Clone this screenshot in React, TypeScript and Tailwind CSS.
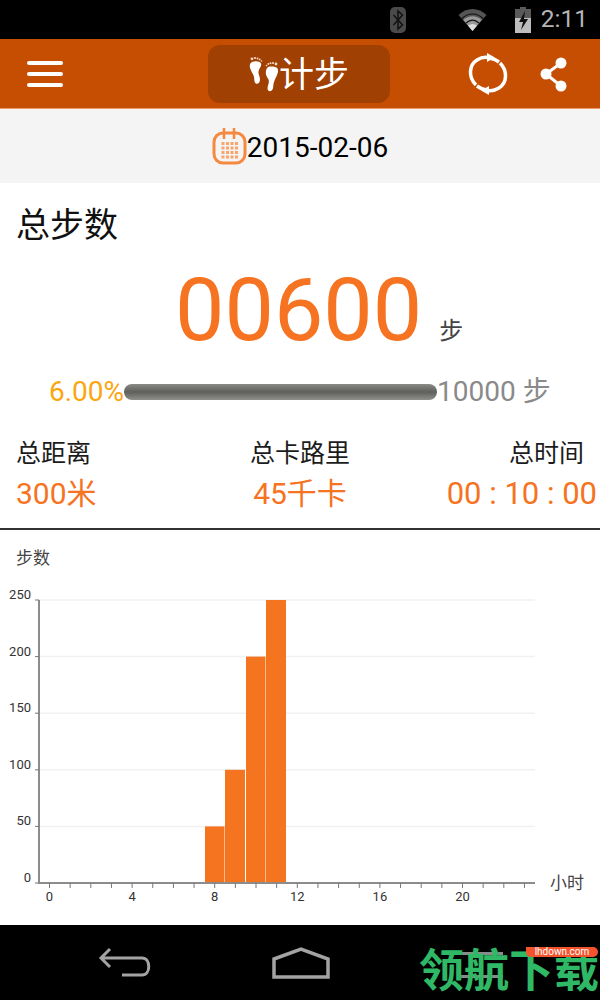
const cjk = "font-['Roboto','Noto_Sans_CJK_SC',sans-serif]";

const hours = Array.from({ length: 24 }, (_, i) => i);
const values = [250, 200, 150, 100, 50, 0];
const bars = [
  { x: 205, w: 19.5, value: 50 },
  { x: 225, w: 20, value: 100 },
  { x: 246, w: 19.5, value: 200 },
  { x: 266, w: 20, value: 250 },
];

const Feet = () => (
  <svg width="30" height="36" viewBox="0 0 30 36" fill="white" className="shrink-0">
    <path d="M3 6c3-1.500 8-1 9 1.500 1 2.500-2 5-2.500 8-.4 2.500 1.500 5 1.500 8 0 3-2 5-4 4-2-1-1.500-4-2-6.500C4.500 18 1 14 .8 10.500.7 8 1.500 6.800 3 6z" />
    <path d="M19 11c3-1 8-.5 9.500 1.500 1 1.500.5 4-.5 6.500-1.200 3-3 6-3.500 9-.4 2.500 0 5-1.800 6.500-2 1.500-4.200.2-4.200-2 0-3 1.800-5 1.300-8-.5-2.500-3-4-3-8 0-2.500 1-5 2.700-5.500z" />
    <g fill="#f5d9c4">
      <circle cx="3" cy="2.800" r="1.400" />
      <circle cx="6" cy="2" r="1.100" />
      <circle cx="8.500" cy="2.400" r="1" />
      <circle cx="10.700" cy="3.400" r="0.900" />
      <circle cx="12.500" cy="5" r="0.800" />
      <circle cx="27" cy="8" r="1.400" />
      <circle cx="24" cy="7" r="1.100" />
      <circle cx="21.500" cy="7.200" r="1" />
      <circle cx="19.300" cy="8" r="0.900" />
      <circle cx="17.500" cy="9.600" r="0.800" />
    </g>
  </svg>
);

const CalendarIcon = () => (
  <svg width="36" height="40" viewBox="0 0 36 40" fill="none" className="shrink-0">
    <rect x="2" y="7" width="31" height="30" rx="9" stroke="#f5893f" strokeWidth="3" />
    <path d="M12 2v11M22 2v11" stroke="#f5893f" strokeWidth="2.500" />
    {[0, 1, 2, 3].map((r) =>
      [0, 1, 2, 3].map((c) => (
        <rect key={`${r}-${c}`} x={9.5 + c * 4.5} y={16 + r * 4.5} width="3" height="3" fill="#f7a56c" />
      ))
    )}
  </svg>
);

const SyncIcon = () => (
  <svg width="42" height="42" viewBox="0 0 42 42" fill="none" stroke="white" strokeWidth="3.500">
    <path d="M9 32C1 24 2 12 10 7c4-2.500 8-3 11-2.500" />
    <path d="M33 10c8 8 7 20-1 25-4 2.500-8 3-11 2.500" />
    <path d="M20 0l8 4.500-8 4.500z" fill="white" stroke="none" />
    <path d="M22 33l-8 4.500 8 4.500z" fill="white" stroke="none" />
    <path d="M24 5.500c4 .5 6 2 8 3.500M18 36.500c-4-.5-6-2-8-3.500" />
  </svg>
);

const ShareIcon = () => (
  <svg width="28" height="36" viewBox="0 0 28 36" fill="white">
    <path d="M21 7L6 18l15 12" fill="none" stroke="white" strokeWidth="3" />
    <circle cx="21" cy="7" r="5.500" />
    <circle cx="6" cy="18" r="5.500" />
    <circle cx="21" cy="30" r="5.500" />
  </svg>
);

const StatusIcons = () => (
  <div className="flex items-center">
    <svg width="16" height="26" viewBox="0 0 16 26">
      <rect width="16" height="26" rx="5" fill="#4a4a4a" />
      <path d="M3.500 8l9 10-4.500 4V4l4.500 4-9 10" fill="none" stroke="#111" strokeWidth="1.500" />
    </svg>
    <svg width="29" height="24" viewBox="0 0 28 24" className="ml-[52px]">
      <path d="M0 7C8-1 20-1 28 7L14 23z" fill="#555" />
      <path d="M5 12c5-5 13-5 18 0l-9 11z" fill="#999" />
      <path d="M3.500 10.500c6-6 15-6 21 0M7.500 15c4-3.500 9-3.500 13 0" stroke="#111" strokeWidth="1.200" fill="none" />
      <path d="M9.500 17.500c3-2 6-2 9 0L14 23z" fill="#ddd" />
    </svg>
    <svg width="16" height="26" viewBox="0 0 16 26" className="ml-[28px]">
      <path d="M5 0h6v2h5v24H0V2h5z" fill="#5a5a5a" />
      <path d="M0 11h16v15H0z" fill="#bdbdbd" />
      <path d="M10 4L4 15h4l-2 8 7-11H9z" fill="#111" />
    </svg>
    <span className="ml-[10px] font-['Roboto',sans-serif] text-[24.5px] leading-none text-[#b5b5b5]">2:11</span>
  </div>
);

const Chart = () => (
  <svg width="600" height="395" viewBox="0 530 600 395" className="block">
    {values.slice(0, 5).map((v, i) => (
      <line key={v} x1="39" x2="535" y1={600 + i * 56.6} y2={600 + i * 56.6} stroke="#f1f1f1" strokeWidth="1.500" />
    ))}
    {bars.map((b) => (
      <rect key={b.x} x={b.x} y={883 - b.value * 1.132} width={b.w} height={b.value * 1.132} fill="#f57420" />
    ))}
    <path d="M39 600v283h496" fill="none" stroke="#8c8c8c" strokeWidth="2" />
    {values.map((v, i) => (
      <g key={v}>
        <line x1="35" x2="39" y1={600 + i * 56.6} y2={600 + i * 56.6} stroke="#777" />
        <text x="31" y={599 + i * 56.6} textAnchor="end" fontSize="13" fill="#333" fontFamily="Roboto">
          {v}
        </text>
      </g>
    ))}
    {hours.map((h) => (
      <line key={h} x1={49.5 + h * 20.65} x2={49.5 + h * 20.65} y1="883" y2="888" stroke="#777" />
    ))}
    {[0, 4, 8, 12, 16, 20].map((h) => (
      <text key={h} x={49.5 + h * 20.65} y="901" textAnchor="middle" fontSize="13" fill="#333" fontFamily="Roboto">
        {h}
      </text>
    ))}
  </svg>
);

export default function App() {
  return (
    <div className="flex h-[1000px] w-[600px] flex-col overflow-hidden bg-white">
      <div className="flex h-[39px] items-center justify-end bg-black pr-[12px]">
        <StatusIcons />
      </div>

      <div className="flex h-[70px] items-center border-b border-[#ef9a66] bg-[#c54e03]">
        <div className="ml-[27px] flex w-[36px] flex-col gap-[7px]">
          <div className="h-[4px] rounded-full bg-white" />
          <div className="h-[4px] rounded-full bg-white" />
          <div className="h-[4px] rounded-full bg-white" />
        </div>
        <div className="ml-[145px] flex h-[58px] w-[182px] items-center justify-center rounded-[12px] bg-[#a04002]">
          <Feet />
          <span className={`${cjk} mt-[4px] text-[35px] leading-none text-white`}>计步</span>
        </div>
        <div className="ml-[77px]">
          <SyncIcon />
        </div>
        <div className="ml-[31px]">
          <ShareIcon />
        </div>
      </div>

      <div className="flex h-[74px] items-center justify-center bg-[#f4f4f4]">
        <CalendarIcon />
        <span className="mt-[3px] -ml-[1px] font-['Roboto',sans-serif] text-[28px] leading-none text-black">2015-02-06</span>
      </div>

      <div className="flex h-[347px] flex-col border-b-2 border-[#333]">
        <div className={`${cjk} mt-[20px] pl-[16px] text-[34px] leading-[44px] text-[#111]`}>总步数</div>
        <div className="mt-[19px] flex items-end pl-[175px]">
          <span className="font-['Roboto',sans-serif] text-[88px] leading-[88px] text-[#f57321]">00600</span>
          <span className={`${cjk} mb-[8px] ml-[17px] text-[24px] leading-[30px] text-[#444]`}>步</span>
        </div>
        <div className="mt-[21px] flex items-center pl-[49px]">
          <span className="font-['Roboto',sans-serif] text-[28px] leading-[34px] text-[#fba60f]">6.00%</span>
          <div className="h-[16px] w-[313px] rounded-full bg-gradient-to-b from-[#8a8a86] via-[#5f5f5b] to-[#8f8f8b]" />
          <span className={`${cjk} text-[28px] leading-[34px] text-[#8a8a8a]`}>10000 步</span>
        </div>
        <div className="mt-[29px] grid grid-cols-3">
          <div className="flex flex-col pl-[16px]">
            <span className={`${cjk} text-[25px] leading-[32px] text-[#1c1c1c]`}>总距离</span>
            <span className={`${cjk} mt-[4px] text-[30px] leading-[40px] text-[#f57321]`}>300米</span>
          </div>
          <div className="flex flex-col items-center">
            <span className={`${cjk} text-[25px] leading-[32px] text-[#1c1c1c]`}>总卡路里</span>
            <span className={`${cjk} mt-[4px] text-[30px] leading-[40px] text-[#f57321]`}>45千卡</span>
          </div>
          <div className="flex flex-col items-end pr-[3px]">
            <span className={`${cjk} mr-[13px] text-[25px] leading-[32px] text-[#1c1c1c]`}>总时间</span>
            <span className={`${cjk} mt-[4px] text-[31px] leading-[40px] text-[#f57321]`}>00 : 10 : 00</span>
          </div>
        </div>
      </div>

      <div className="relative flex-1 bg-white">
        <div className={`${cjk} absolute top-[17px] left-[16px] text-[17px] leading-[22px] text-[#444]`}>步数</div>
        <div className={`${cjk} absolute top-[342px] left-[550px] text-[17px] leading-[22px] text-[#444]`}>小时</div>
        <Chart />
      </div>

      <div className="relative flex h-[75px] items-center bg-black">
        <svg width="54" height="32" viewBox="0 0 54 32" fill="none" stroke="#a3a3a3" strokeWidth="3" className="ml-[98px]">
          <path d="M12 2L3 11l9 9M3 11h41c9 0 9 17 0 17H24" />
        </svg>
        <svg width="58" height="32" viewBox="0 0 58 32" fill="none" stroke="#a3a3a3" strokeWidth="3.500" className="ml-[120px]">
          <path d="M2 12L29 2l27 10v18H2z" />
        </svg>
        <div className="absolute top-[27px] left-[461px] h-[26px] w-[42px] border-y-[3px] border-[#8a8a8a]" />
        <span className="absolute top-[16px] left-[419px] font-['Noto_Sans_CJK_SC',sans-serif] text-[45px] leading-[54px] font-bold whitespace-nowrap text-[#2fb866]">
          领航下载
        </span>
        <span className="absolute top-[22px] left-[526px] flex h-[10px] w-[72px] items-center justify-center rounded-[5px] rounded-tl-none bg-[#f4532d] font-['Roboto',sans-serif] text-[10px] leading-none text-white">
          lhdown.com
        </span>
      </div>
    </div>
  );
}
